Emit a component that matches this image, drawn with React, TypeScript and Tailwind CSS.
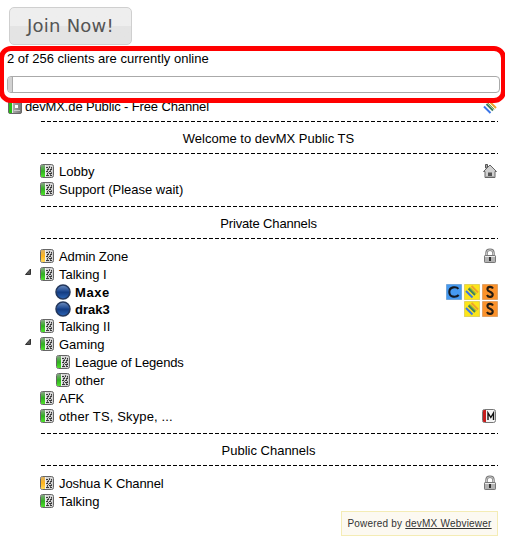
import React from "react";

type Tone = "green" | "yellow";

function ChannelIcon({ tone = "green" }: { tone?: Tone }) {
  const green = tone === "green";
  return (
    <svg width="14" height="14" viewBox="0 0 14 14" className="shrink-0">
      <defs>
        <linearGradient id={"book-" + tone} x1="0" y1="0" x2="0" y2="1">
          <stop offset="0" stopColor={green ? "#86a584" : "#d9b066"} />
          <stop offset=".5" stopColor={green ? "#30b020" : "#ffb51c"} />
          <stop offset="1" stopColor={green ? "#4fe02c" : "#ffd95c"} />
        </linearGradient>
      </defs>
      <rect x=".5" y=".5" width="13" height="13" rx="2" fill="#d4d4d4" stroke="#666" />
      <path d="M2 1H5V13H2Q1 13 1 12V2Q1 1 2 1Z" fill={"url(#book-" + tone + ")"} />
      <path d="M5 1H6V13H5Z" fill="#f0f0f0" />
      <g stroke="#383838" strokeWidth="1" fill="none">
        <path d="M6 3.5H8M9 3.5H10M11 3.5H12M7 5.5H9M10 5.5H12M6 7.5H8M9 7.5H11M7 9.5H8M9 9.5H12M6 11.5H9M10 11.5H12" />
        <path d="M9 2.5H10M11 4.5H12M8 4.5H9M7 6.5H8M10 6.5H11M8 8.5H9M11 8.5H12M7 10.5H8M10 10.5H11" opacity=".7" />
      </g>
    </svg>
  );
}

function ServerIcon() {
  return (
    <svg width="14" height="14" viewBox="0 0 14 14" className="shrink-0">
      <defs>
        <linearGradient id="server" x1="0" x2="1">
          <stop stopColor="#c8c8c8" />
          <stop offset="1" stopColor="#747474" />
        </linearGradient>
      </defs>
      <rect x=".5" y=".5" width="13" height="13" rx="1.5" fill="url(#server)" stroke="#686868" />
      <path d="M1 1H4V13H1Z" fill="#27bc16" />
      <path d="M4 1H5V13H4Z" fill="#e8e8e8" />
      <path d="M7 5H10V8H7Z" fill="#fff" />
      <path d="M6 10H12V11H6Z" fill="#c9c9c9" />
    </svg>
  );
}

function User() {
  return (
    <svg width="16" height="16" viewBox="0 0 16 16" className="shrink-0">
      <defs>
        <linearGradient id="orb" x1="0" y1="0" x2="0" y2="1">
          <stop stopColor="#6f8fc0" />
          <stop offset=".45" stopColor="#1f4a92" />
          <stop offset=".5" stopColor="#123a80" />
          <stop offset="1" stopColor="#2c66b8" />
        </linearGradient>
      </defs>
      <circle cx="8" cy="8" r="7" fill="url(#orb)" stroke="#23375c" strokeWidth="1.5" />
    </svg>
  );
}

function Stripes() {
  return (
    <g fill="none" strokeWidth="2">
      <path d="M2 7.5L8.5 14" stroke="#3975e8" />
      <path d="M4.5 5L11 11.5" stroke="#3c8060" />
      <path d="M5.7 3.8L12.2 10.3" stroke="#73a02d" strokeWidth="1" />
      <path d="M7.5 2.5L14 9" stroke="#eda32d" />
    </g>
  );
}

function StripesLogo() {
  return (
    <svg width="16" height="16" viewBox="0 0 16 16">
      <Stripes />
    </svg>
  );
}

function Badge({ kind }: { kind: "C" | "D" | "S" }) {
  const fill = kind === "C" ? "#469af1" : kind === "D" ? "#fce51b" : "#fb922b";
  return (
    <svg width="16" height="16" viewBox="0 0 16 16" className="shrink-0">
      <rect x=".25" y=".25" width="15.5" height="15.5" rx=".5" fill={fill} stroke="#777" strokeOpacity=".5" strokeWidth=".5" />
      {kind === "C" && <path d="M12.4 4.8C10.6 2.4 3.3 2.3 3.3 8S10.4 13.6 12.7 11" fill="none" stroke="#141a22" strokeWidth="2.1" />}
      {kind === "D" && <g transform="translate(0 -.5)"><Stripes /></g>}
      {kind === "S" && <path d="M11 4.5C9.5 2 5.4 2.5 5.4 5.2C5.4 8.2 10.7 7.3 10.7 10.5C10.7 13.5 6.2 13.7 5 11" fill="none" stroke="#241b12" strokeWidth="2.1" />}
    </svg>
  );
}

function Lock() {
  return (
    <svg width="14" height="16" viewBox="0 0 14 16" className="mr-px">
      <path d="M3.5 8V5Q3.5 1.8 7 1.8T10.5 5V8" fill="none" stroke="#777" strokeWidth="2.4" />
      <path d="M3.5 7V5Q3.5 1.8 7 1.8T10.5 5V7" fill="none" stroke="#ddd" strokeWidth=".8" />
      <rect x="1.5" y="7.5" width="11" height="7" rx=".7" fill="#b3b3b3" stroke="#777" />
      <path d="M2 8.5H12" stroke="#ededed" />
      <path d="M6 9H8V13H6Z" fill="#333" />
    </svg>
  );
}

function Home() {
  return (
    <svg width="16" height="16" viewBox="0 0 16 16">
      <path d="M3.5 1.5H5.5V5H3.5Z" fill="#aaa" stroke="#555" />
      <path d="M8 2L14.5 8.5H13V14.5H3V8.5H1.5Z" fill="#d0d0d0" stroke="#666" />
      <path d="M4 13.5H12" stroke="#aaa" />
      <path d="M6 9.5H10V13H6Z" fill="#555" />
    </svg>
  );
}

function Moderated() {
  return (
    <svg width="14" height="14" viewBox="0 0 14 14" className="mr-0.5">
      <rect x=".5" y=".5" width="13" height="13" rx="2" fill="#f4f4f4" stroke="#777" />
      <path d="M2 1H4V13H2Q1 13 1 12V2Q1 1 2 1Z" fill="#c51c1c" />
      <path d="M6 11V4L8.8 8.5L11.5 4V11" fill="none" stroke="#111" strokeWidth="1.4" />
    </svg>
  );
}

function Divider() {
  return <div className="ml-[41px] h-px w-[457px] bg-[repeating-linear-gradient(90deg,#000_0_4px,transparent_4px_6px)]" />;
}

function Section({ children }: { children: React.ReactNode }) {
  return (
    <div>
      <Divider />
      <h2 className="ml-[39px] flex h-[31px] w-[459px] items-center justify-center pt-[2px]">{children}</h2>
      <Divider />
    </div>
  );
}

interface RowProps {
  name: string;
  tone?: Tone;
  nested?: boolean;
  open?: boolean;
  status?: React.ReactNode;
  tracking?: string;
}

function Channel({ name, tone, nested, open, status, tracking = "" }: RowProps) {
  return (
    <div className={"flex h-[18px] items-center pr-[7px] " + (nested ? "pl-[56px]" : "pl-[24px]")}>
      {!nested && (
        <span className="w-4 shrink-0">
          {open && (
            <svg width="8" height="8" viewBox="0 0 8 8" className="-mt-1">
              <path d="M1.5 6.5H6.5V1Z" fill="#555" stroke="#333" />
            </svg>
          )}
        </span>
      )}
      <ChannelIcon tone={tone} />
      <span className={"ml-[5px] flex-1 pt-[2px] " + tracking}>{name}</span>
      {status}
    </div>
  );
}

function Client({ name, badges, tracking = "" }: { name: string; badges: ("C" | "D" | "S")[]; tracking?: string }) {
  return (
    <div className="flex h-[17px] items-center pl-[55px] pr-[7px]">
      <User />
      <b className={"ml-1 flex-1 pt-[2px] " + tracking}>{name}</b>
      <span className="flex gap-[2px]">{badges.map((b) => <Badge key={b} kind={b} />)}</span>
    </div>
  );
}

export default function App() {
  return (
    <main className="relative h-[543px] w-[505px] overflow-hidden bg-white font-['Liberation_Sans',Arial,sans-serif] text-[13px] leading-[18px] text-black">
      <div className="px-[9px] pt-[7px]">
        <button className="block h-[38px] w-[123px] rounded-[5px] border border-[#cfcfcf] bg-linear-to-b from-[#eeeeee] from-50% to-[#e4e4e4] to-50% font-['DejaVu_Sans',Verdana,sans-serif] text-[18px] tracking-[0.25px] text-[#555]">Join Now!</button>
      </div>
      <p className="ml-[7px] mt-[5px] h-[18px]">2 of 256 clients are currently online</p>
      <div className="ml-[7px] mt-[8px] h-[17px] w-[493px] overflow-hidden rounded-[4px] border border-[#aaa]">
        <div className="h-full w-[5px] border-r border-[#aaa] bg-[#d2d2d2]" />
      </div>
      <div className="mt-[5px] flex h-[18px] items-center pl-[8px] pr-[7px]">
        <ServerIcon />
        <span className="ml-[3px] flex-1 tracking-[-0.13px]">devMX.de Public - Free Channel</span>
        <StripesLogo />
      </div>
      <div className="mt-[5px]"><Section>Welcome to devMX Public TS</Section></div>
      <div className="mb-[8px] mt-[8px]">
        <Channel name="Lobby" status={<Home />} />
        <Channel name="Support (Please wait)" />
      </div>
      <Section><span className="tracking-[-0.15px]">Private Channels</span></Section>
      <div className="mb-[8px] mt-[8px]">
        <Channel name="Admin Zone" tone="yellow" status={<Lock />} tracking="tracking-[-0.1px]" />
        <Channel name="Talking I" open />
        <Client name="Maxe" badges={["C", "D", "S"]} tracking="tracking-[0.6px]" />
        <Client name="drak3" badges={["D", "S"]} />
        <Channel name="Talking II" />
        <Channel name="Gaming" open />
        <Channel name="League of Legends" nested tracking="tracking-[-0.16px]" />
        <Channel name="other" nested />
        <Channel name="AFK" />
        <Channel name="other TS, Skype, ..." status={<Moderated />} tracking="tracking-[0.14px]" />
      </div>
      <Section>Public Channels</Section>
      <div className="mt-[8px]">
        <Channel name="Joshua K Channel" tone="yellow" status={<Lock />} tracking="tracking-[-0.1px]" />
        <Channel name="Talking" />
      </div>
      <footer className="ml-[341px] mt-px flex h-[25px] w-[157px] items-center justify-center whitespace-nowrap border border-[#f4ecb5] bg-[#fcf9f1] text-[10px] tracking-[0.21px] text-[#333]">
        <span>Powered by <a className="underline">devMX Webviewer</a></span>
      </footer>
      <div className="pointer-events-none absolute left-[-1px] top-[46px] h-[57px] w-[507px] rounded-[12px] border-[5px] border-[#ff0000]" />
    </main>
  );
}
